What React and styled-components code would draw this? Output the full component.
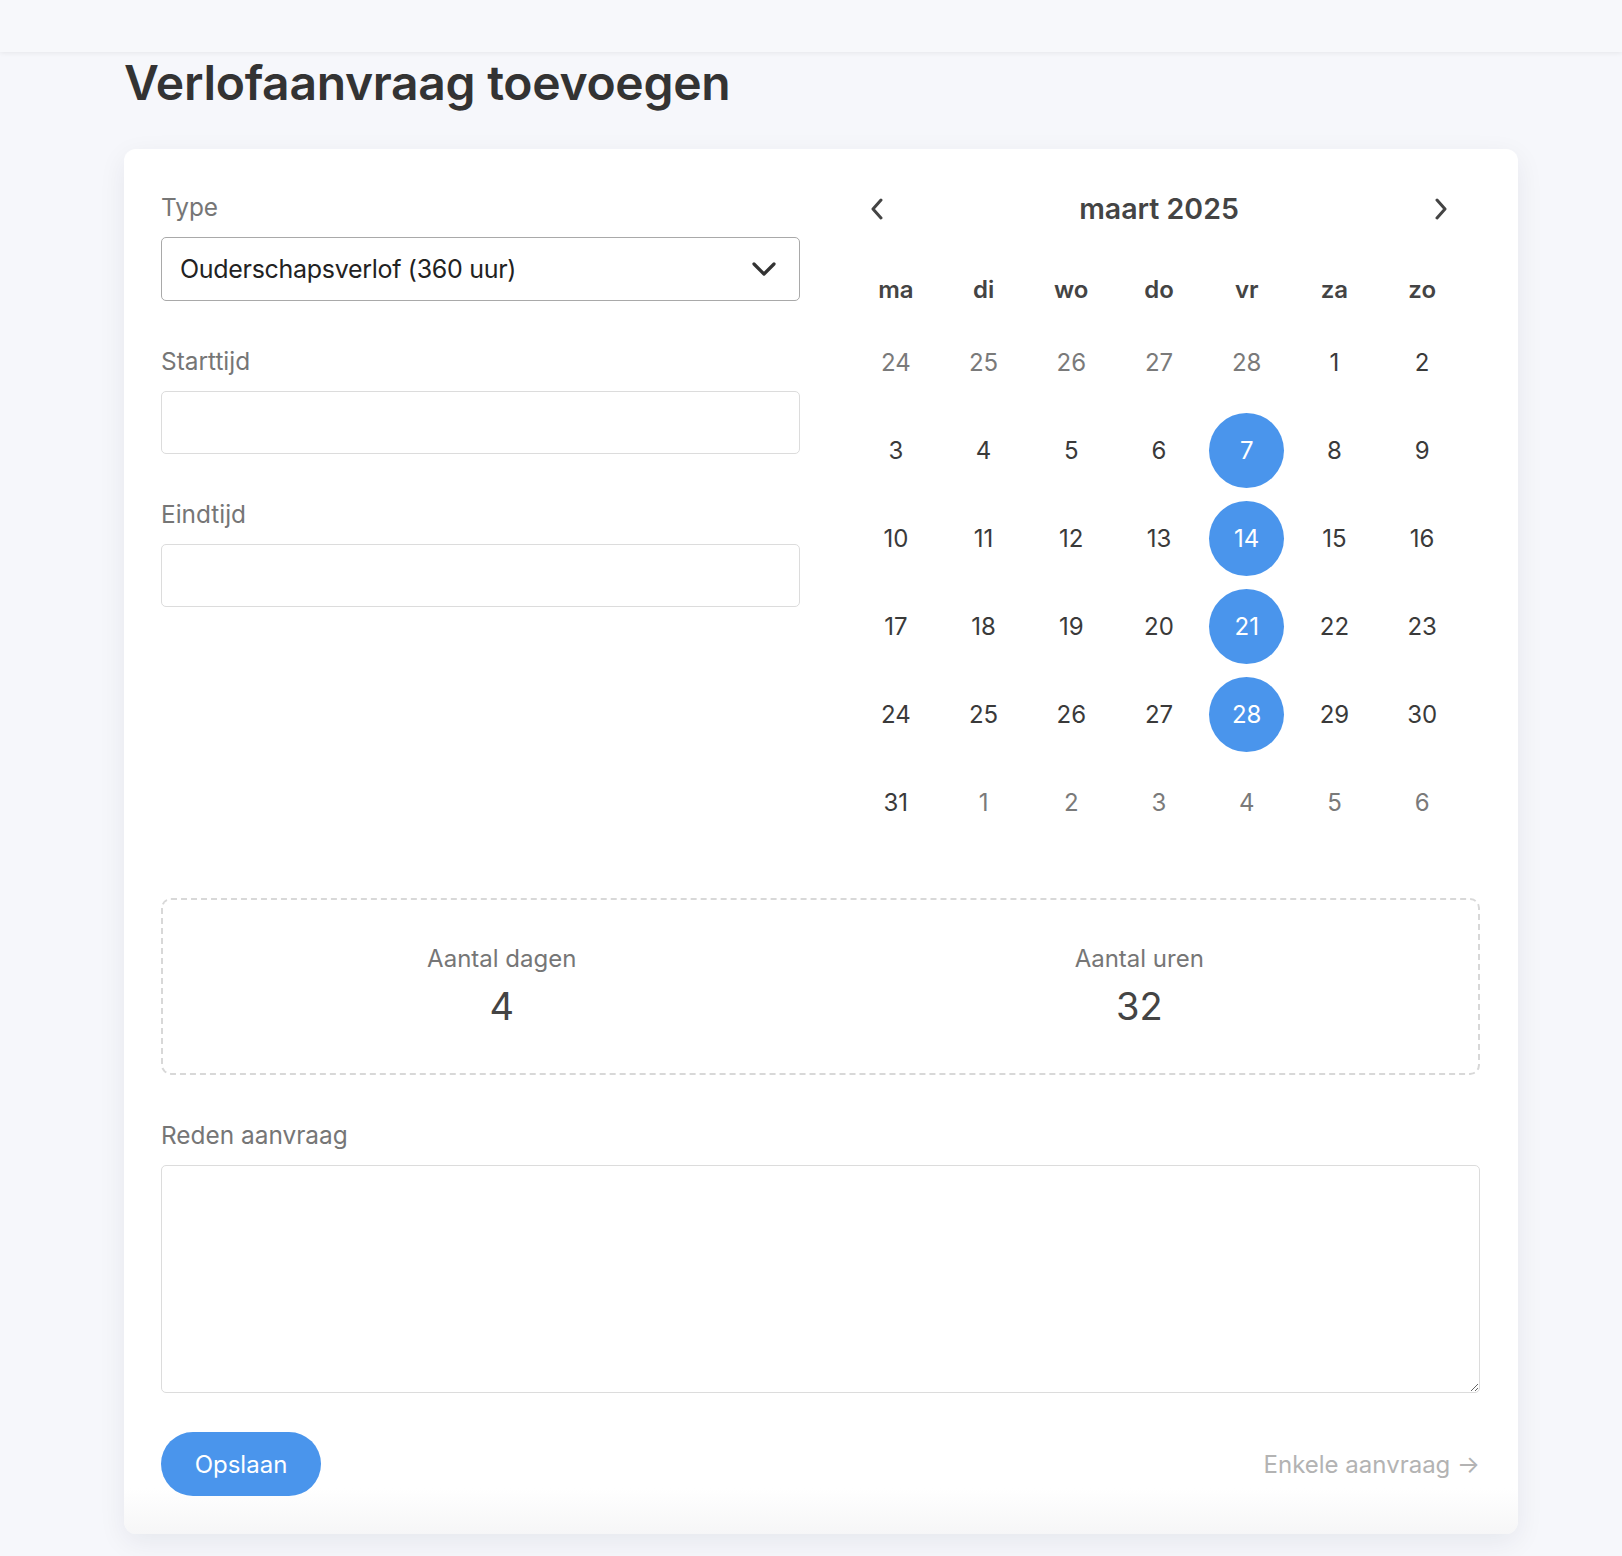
import React from 'react';
import styled, { createGlobalStyle } from 'styled-components';

const GlobalStyle = createGlobalStyle`
  body {
    margin: 0;
    background: #f6f7fb;
    font-family: Inter, "Noto Sans", "Liberation Sans", sans-serif;
    color: #333;
  }
  * {
    box-sizing: border-box;
  }
`;

const TopBar = styled.header`
  height: 52px;
  background: #f7f8fb;
  box-shadow: 0 1px 5px rgba(0, 0, 0, 0.07);
  position: relative;
  z-index: 1;
`;

const Main = styled.main`
  width: 1394px;
  margin-left: 124px;
  padding-bottom: 22px;
`;

const Title = styled.h1`
  margin: 1px 0 37px;
  font-size: 48px;
  line-height: 59px;
  font-weight: 600;
  color: #333;
  letter-spacing: -0.3px;
`;

const Card = styled.section`
  background: linear-gradient(to bottom, #fff calc(100% - 46px), #f6f6f7 100%);
  border-radius: 12px;
  padding: 40px 38px 38px 37px;
  box-shadow: 0 8px 28px rgba(20, 30, 60, 0.07);
`;

const Columns = styled.div`
  display: grid;
  grid-template-columns: 639px 1fr;
  column-gap: 40px;
  margin-bottom: 52px;
`;

const Field = styled.div`
  margin-bottom: ${(p) => p.$space ?? 42}px;
`;

const Label = styled.label`
  display: block;
  font-size: 24.4px;
  line-height: 36px;
  color: #767676;
  margin-bottom: 12px;
`;

const SelectBox = styled.div`
  height: 64px;
  border: 1px solid #a9a9a9;
  border-radius: 5px;
  display: flex;
  align-items: center;
  justify-content: space-between;
  padding: 0 22px 0 18px;
  font-size: 25px;
  letter-spacing: -0.3px;
  color: #222;
`;

const TextInput = styled.input`
  display: block;
  width: 100%;
  height: 63px;
  border: 1px solid #dcdcdc;
  border-radius: 5px;
  background: #fff;
  font: inherit;
  font-size: 24px;
  padding: 0 18px;
`;

const TextArea = styled.textarea`
  display: block;
  width: 100%;
  height: 228px;
  border: 1px solid #dcdcdc;
  border-radius: 5px;
  background: #fff;
  font: inherit;
  font-size: 24px;
  padding: 14px 18px;
`;

const Calendar = styled.div`
  padding: 0 14px 0 12px;
`;

const CalHeader = styled.div`
  display: flex;
  align-items: center;
  justify-content: space-between;
  height: 39px;
  margin-bottom: 32px;
`;

const NavButton = styled.button`
  width: 50px;
  height: 39px;
  border: none;
  background: none;
  padding: 0;
  display: flex;
  align-items: center;
  justify-content: center;
  color: #444;
  cursor: pointer;
`;

const MonthTitle = styled.div`
  font-size: 28.5px;
  font-weight: 600;
  color: #444;
`;

const Grid = styled.div`
  display: grid;
  grid-template-columns: repeat(7, 1fr);
`;

const WeekDay = styled.div`
  height: 58px;
  display: flex;
  align-items: center;
  justify-content: center;
  font-size: 24px;
  font-weight: 600;
  color: #444;
`;

const DayCell = styled.div`
  height: 88px;
  display: flex;
  align-items: center;
  justify-content: center;
`;

const DayNum = styled.span`
  width: 75px;
  height: 75px;
  border-radius: 50%;
  display: flex;
  align-items: center;
  justify-content: center;
  font-size: 24px;
  color: ${(p) => (p.$selected ? '#fff' : p.$muted ? '#7a7a7a' : '#3a3a3a')};
  background: ${(p) => (p.$selected ? '#4a95ec' : 'transparent')};
`;

const Summary = styled.div`
  border: 2px dashed #d8d8d8;
  border-radius: 10px;
  padding: 40px 40px 38px;
  display: grid;
  grid-template-columns: 1fr 1fr;
  column-gap: 40px;
  margin-bottom: 42px;
`;

const Stat = styled.div`
  text-align: center;
`;

const StatLabel = styled.div`
  font-size: 24px;
  line-height: 38px;
  color: #767676;
`;

const StatValue = styled.div`
  font-size: 38px;
  line-height: 57px;
  color: #444;
`;

const Footer = styled.div`
  display: flex;
  align-items: center;
  justify-content: space-between;
  margin-top: 39px;
`;

const SaveButton = styled.button`
  height: 64px;
  width: 160px;
  border: none;
  border-radius: 32px;
  background: #4a95ec;
  color: #fff;
  font: inherit;
  font-size: 24px;
  cursor: pointer;
`;

const LinkText = styled.a`
  font-size: 24px;
  color: #b3b3b3;
  text-decoration: none;
  cursor: pointer;
`;

const Chevron = ({ dir }) => {
  if (dir === 'down') {
    return (
      <svg width="26" height="16" viewBox="0 0 26 16" fill="none">
        <polyline points="3,3 13,13 23,3" stroke="#333" strokeWidth="3.2" strokeLinecap="round" strokeLinejoin="round" />
      </svg>
    );
  }
  const pts = dir === 'left' ? '11,2 3,11 11,20' : '3,2 11,11 3,20';
  return (
    <svg width="14" height="22" viewBox="0 0 14 22" fill="none">
      <polyline points={pts} stroke="#444" strokeWidth="3" strokeLinecap="round" strokeLinejoin="round" />
    </svg>
  );
};

const weekDays = ['ma', 'di', 'wo', 'do', 'vr', 'za', 'zo'];

// maart 2025, week begint op maandag
const days = [
  ...[24, 25, 26, 27, 28].map((d) => ({ d, muted: true })),
  ...Array.from({ length: 31 }, (_, i) => ({ d: i + 1 })),
  ...[1, 2, 3, 4, 5, 6].map((d) => ({ d, muted: true })),
];

const selected = [7, 14, 21, 28];

export default function App() {
  return (
    <>
      <GlobalStyle />
      <TopBar />
      <Main>
        <Title>Verlofaanvraag toevoegen</Title>
        <Card>
          <Columns>
            <div>
              <Field>
                <Label>Type</Label>
                <SelectBox>
                  <span>Ouderschapsverlof (360 uur)</span>
                  <Chevron dir="down" />
                </SelectBox>
              </Field>
              <Field>
                <Label>Starttijd</Label>
                <TextInput type="text" />
              </Field>
              <Field $space={0}>
                <Label>Eindtijd</Label>
                <TextInput type="text" />
              </Field>
            </div>
            <Calendar>
              <CalHeader>
                <NavButton aria-label="Vorige maand">
                  <Chevron dir="left" />
                </NavButton>
                <MonthTitle>maart 2025</MonthTitle>
                <NavButton aria-label="Volgende maand">
                  <Chevron dir="right" />
                </NavButton>
              </CalHeader>
              <Grid>
                {weekDays.map((w) => (
                  <WeekDay key={w}>{w}</WeekDay>
                ))}
                {days.map((day, i) => (
                  <DayCell key={i}>
                    <DayNum
                      $muted={day.muted}
                      $selected={!day.muted && selected.includes(day.d)}
                    >
                      {day.d}
                    </DayNum>
                  </DayCell>
                ))}
              </Grid>
            </Calendar>
          </Columns>

          <Summary>
            <Stat>
              <StatLabel>Aantal dagen</StatLabel>
              <StatValue>4</StatValue>
            </Stat>
            <Stat>
              <StatLabel>Aantal uren</StatLabel>
              <StatValue>32</StatValue>
            </Stat>
          </Summary>

          <Field $space={0}>
            <Label>Reden aanvraag</Label>
            <TextArea />
          </Field>

          <Footer>
            <SaveButton>Opslaan</SaveButton>
            <LinkText>Enkele aanvraag →</LinkText>
          </Footer>
        </Card>
      </Main>
    </>
  );
}
